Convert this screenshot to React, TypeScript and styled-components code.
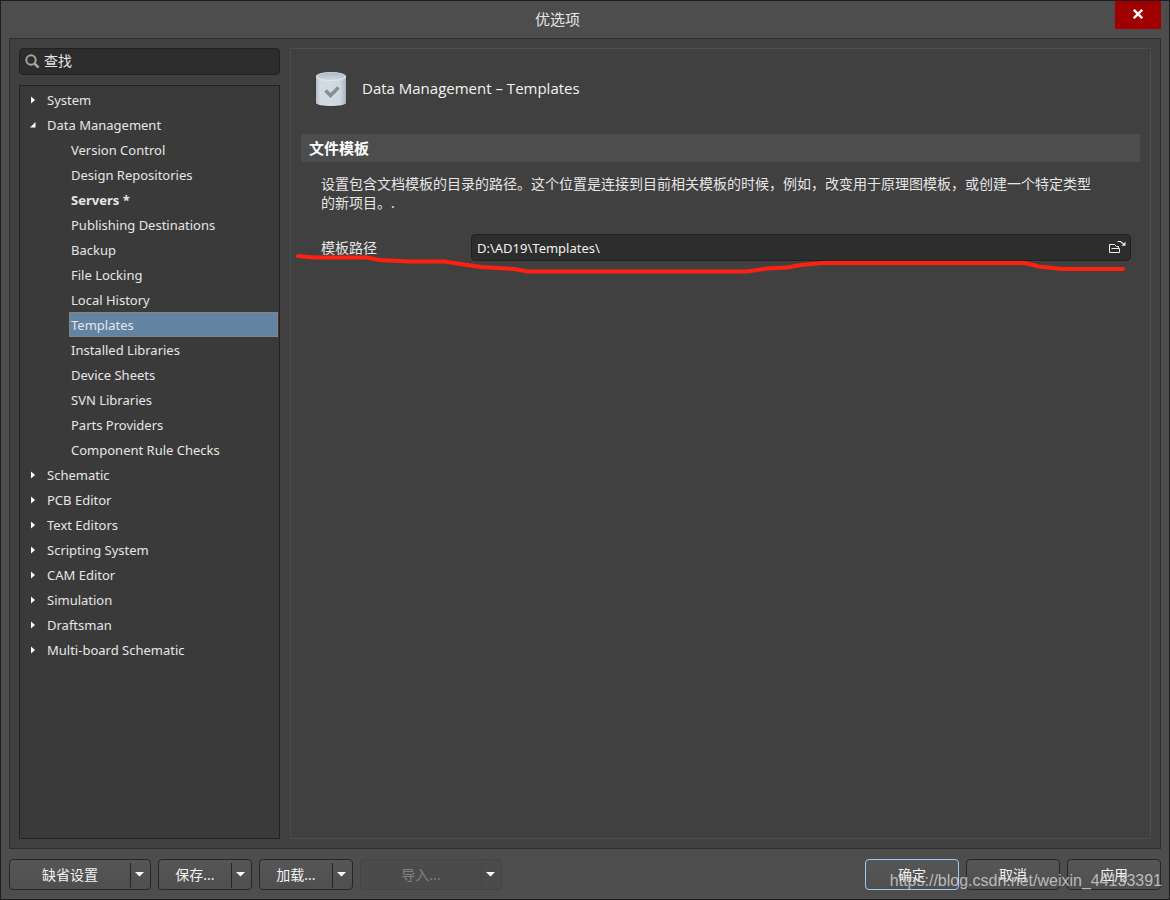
import React from "react";
import styled, { createGlobalStyle } from "styled-components";

const GlobalStyle = createGlobalStyle`
  * { box-sizing: border-box; }
  body {
    margin: 0;
    background: #4d4d4d;
    color: #e6e6e6;
    font-family: "Noto Sans", "Noto Sans CJK SC", sans-serif;
    font-size: 14px;
  }
  button, input { font: inherit; color: inherit; }
  ul { list-style: none; margin: 0; padding: 0; }
`;

const Window = styled.div`
  position: relative;
  display: flex;
  flex-direction: column;
  min-height: 100vh;
  padding: 0 8px;
  border: 1px solid #1e1e1e;
  background: #4d4d4d;
`;

const TitleBar = styled.header`
  display: flex;
  align-items: flex-start;
  height: 37px;
`;

const WindowTitle = styled.h1`
  flex: 1;
  margin: 0;
  padding-right: 9px;
  text-align: center;
  font-size: 15px;
  font-weight: 400;
  line-height: 36px;
`;

const CloseButton = styled.button`
  display: flex;
  align-items: center;
  justify-content: center;
  width: 46px;
  height: 28px;
  padding: 0 1px 2px 0;
  border: 0;
  background: #a00000;
`;

const Workspace = styled.main`
  flex: 1;
  display: flex;
  gap: 10px;
  padding: 9px;
  border: 1px solid #2e2e2e;
  background: #404040;
`;

const Sidebar = styled.aside`
  display: flex;
  flex-direction: column;
  flex: 0 0 261px;
  gap: 10px;
`;

const SearchBox = styled.label`
  display: flex;
  align-items: center;
  gap: 4px;
  height: 27px;
  padding: 0 5px;
  border: 1px solid #222;
  border-radius: 4px;
  background: #2d2d2d;
`;

const TextInput = styled.input`
  flex: 1;
  min-width: 0;
  height: 25px;
  padding: 0 0 2px;
  border: 0;
  outline: 0;
  background: transparent;
  color: #f2f2f2;
  &::placeholder { color: #e6e6e6; opacity: 1; }
`;

const PathInput = styled(TextInput)`
  padding: 0;
  font-size: 13px;
`;

const Tree = styled.nav`
  flex: 1;
  padding: 1px;
  border: 1px solid #222;
  background: #3a3a3a;
  font-size: 13px;
`;

const BranchButton = styled.button`
  display: flex;
  align-items: center;
  width: 100%;
  height: 25px;
  padding: 2px 0 0 9px;
  border: 0;
  background: transparent;
  line-height: 25px;
  text-align: left;
`;

const ArrowSlot = styled.span`
  display: flex;
  width: 17px;
  padding-bottom: 2px;
`;

const LeafItem = styled.li`
  padding-left: 48px;
`;

const LeafButton = styled.button<{ $selected?: boolean; $modified?: boolean }>`
  display: block;
  width: 100%;
  height: 25px;
  padding: 2px 1px 0;
  border: 1px dotted ${(p) => (p.$selected ? "#b08050" : "transparent")};
  background: ${(p) => (p.$selected ? "#6383a3" : "transparent")};
  font-weight: ${(p) => (p.$modified ? 700 : 400)};
  line-height: 21px;
  text-align: left;
`;

const Page = styled.section`
  position: relative;
  flex: 1;
  min-width: 0;
  padding: 10px;
  border: 1px solid #4d4d4d;
`;

const PageHeader = styled.div`
  display: flex;
  align-items: center;
  gap: 11px;
  height: 60px;
  padding-left: 10px;
`;

const PageTitle = styled.h2`
  margin: 0;
  padding-bottom: 2px;
  font-family: "Open Sans", "Noto Sans CJK SC", sans-serif;
  font-size: 15px;
  font-weight: 400;
  color: #f2f2f2;
`;

const SectionTitle = styled.h3`
  margin: 15px 0 0;
  padding: 0 8px;
  background: #4d4d4d;
  color: #fff;
  font-size: 15px;
  font-weight: 700;
  line-height: 28px;
`;

const Description = styled.p`
  margin: 12px 40px 0 20px;
  line-height: 19px;
`;

const Field = styled.div`
  display: flex;
  align-items: center;
  margin: 22px 9px 0 20px;
`;

const FieldLabel = styled.label`
  flex: 0 0 150px;
  padding-bottom: 2px;
`;

const PathBox = styled.div`
  flex: 1;
  display: flex;
  align-items: center;
  height: 27px;
  padding: 0 3px 0 5px;
  border: 1px solid #222;
  border-radius: 4px;
  background: #2d2d2d;
`;

const IconButton = styled.button`
  display: flex;
  padding: 0;
  border: 0;
  background: transparent;
`;

const MarkerLine = styled.svg`
  position: absolute;
  top: 201px;
  left: 0;
  width: 100%;
  height: 28px;
  pointer-events: none;
`;

const Footer = styled.footer`
  display: flex;
  justify-content: space-between;
  padding: 10px 0 9px;
`;

const ButtonGroup = styled.div`
  display: flex;
  gap: 7px;
`;

const SplitButton = styled.div<{ $wide?: boolean; $disabled?: boolean }>`
  display: flex;
  width: ${(p) => (p.$wide ? 142 : 94)}px;
  height: 31px;
  border: 1px solid ${(p) => (p.$disabled ? "#444" : "#262626")};
  border-radius: 4px;
  background: ${(p) => (p.$disabled ? "#4b4b4b" : "linear-gradient(#565656, #4f4f4f)")};
`;

const SplitAction = styled.button`
  flex: 1;
  padding: 0 0 2px;
  border: 0;
  background: transparent;
  color: #f2f2f2;
  &:disabled { color: #808080; }
`;

const SplitToggle = styled.button<{ $disabled?: boolean }>`
  display: flex;
  align-items: center;
  justify-content: center;
  width: 20px;
  margin: 3px 0 1px;
  padding: 0 2px 2px 0;
  border: 0;
  border-left: 1px solid ${(p) => (p.$disabled ? "#444" : "#262626")};
  background: transparent;
`;

const DialogButton = styled.button<{ $primary?: boolean }>`
  width: 94px;
  height: 31px;
  padding: 0 0 2px;
  border: 1px solid ${(p) => (p.$primary ? "#99c9f5" : "#262626")};
  border-radius: 4px;
  background: linear-gradient(#565656, #4f4f4f);
  color: #f2f2f2;
`;

const Watermark = styled.span`
  position: absolute;
  right: 7px;
  bottom: 8px;
  color: rgba(215, 215, 215, 0.8);
  font-family: "Liberation Sans", sans-serif;
  font-size: 16px;
  line-height: 20px;
  pointer-events: none;
`;

type Branch = { name: string; children?: string[] };

const branches: Branch[] = [
  { name: "System" },
  {
    name: "Data Management",
    children: [
      "Version Control",
      "Design Repositories",
      "Servers *",
      "Publishing Destinations",
      "Backup",
      "File Locking",
      "Local History",
      "Templates",
      "Installed Libraries",
      "Device Sheets",
      "SVN Libraries",
      "Parts Providers",
      "Component Rule Checks",
    ],
  },
  { name: "Schematic" },
  { name: "PCB Editor" },
  { name: "Text Editors" },
  { name: "Scripting System" },
  { name: "CAM Editor" },
  { name: "Simulation" },
  { name: "Draftsman" },
  { name: "Multi-board Schematic" },
];

const splitButtons = [
  { label: "缺省设置", wide: true },
  { label: "保存..." },
  { label: "加载..." },
  { label: "导入...", wide: true, disabled: true },
];

const Arrow = ({ open }: { open: boolean }) => (
  <svg width="7" height="8" viewBox="0 0 7 8" fill="#fff" aria-hidden="true">
    <path d={open ? "M0 6.5H5.5V1Z" : "M1 0.5V7.5L5 4Z"} />
  </svg>
);

const Caret = () => (
  <svg width="9" height="5" viewBox="0 0 9 5" fill="#fff" aria-hidden="true">
    <path d="M0 0H9L4.5 4.6Z" />
  </svg>
);

const SearchIcon = () => (
  <svg width="15" height="15" viewBox="0 0 15 15" fill="none" stroke="#a3a3a3" aria-hidden="true">
    <circle cx="6" cy="6" r="4.7" strokeWidth="2" />
    <path d="M9.5 9.5L13.6 13.6" strokeWidth="2.6" />
  </svg>
);

const DatabaseIcon = () => (
  <svg width="40" height="40" viewBox="0 0 40 40" aria-hidden="true">
    <defs>
      <linearGradient id="drum">
        <stop offset="0" stopColor="#b4bdc7" />
        <stop offset="0.15" stopColor="#d3dae2" />
        <stop offset="0.8" stopColor="#cfd7e0" />
        <stop offset="1" stopColor="#aab4bf" />
      </linearGradient>
      <linearGradient id="lid" x2="0" y2="1">
        <stop offset="0" stopColor="#aeb9c3" />
        <stop offset="1" stopColor="#cdd6de" />
      </linearGradient>
    </defs>
    <path d="M4.5 9V34.5C5 39 35 39 35.5 34.5V9Z" fill="#2d2d2d" opacity="0.5" />
    <path d="M5 7.5V34C5 38 35 38 35 34V7.5Z" fill="url(#drum)" />
    <ellipse cx="20" cy="7.5" rx="15" ry="4.6" fill="#dfe6ec" />
    <ellipse cx="20" cy="7.3" rx="14" ry="3.7" fill="url(#lid)" />
    <path d="M14.5 21.5L19.5 26.5L27.5 18.5" fill="none" stroke="#858d96" strokeWidth="3.4" />
  </svg>
);

const BrowseIcon = () => (
  <svg width="18" height="15" viewBox="0 0 18 15" fill="none" stroke="#eee" aria-hidden="true">
    <path d="M0.5 12.5V4.5H5.5L7.5 6.5H9.5V8M0.5 12.5H10.5V8.5H2.5" />
    <path d="M8.5 1.5H11.5L14.5 4" strokeWidth="1.2" />
    <path d="M16.5 1.8V5.8H12.4Z" fill="#eee" stroke="none" />
  </svg>
);

export default function App() {
  return (
    <>
      <GlobalStyle />
      <Window lang="zh-CN">
        <TitleBar>
          <WindowTitle>优选项</WindowTitle>
          <CloseButton aria-label="关闭">
            <svg width="10" height="10" viewBox="0 0 10 10" stroke="#fff" strokeWidth="2.4" aria-hidden="true">
              <path d="M0.8 0.8L9.2 9.2M9.2 0.8L0.8 9.2" />
            </svg>
          </CloseButton>
        </TitleBar>

        <Workspace>
          <Sidebar>
            <SearchBox>
              <SearchIcon />
              <TextInput type="text" placeholder="查找" aria-label="查找" />
            </SearchBox>
            <Tree>
              <ul>
                {branches.map((branch) => (
                  <li key={branch.name}>
                    <BranchButton aria-expanded={!!branch.children}>
                      <ArrowSlot>
                        <Arrow open={!!branch.children} />
                      </ArrowSlot>
                      {branch.name}
                    </BranchButton>
                    {branch.children && (
                      <ul>
                        {branch.children.map((name) => (
                          <LeafItem key={name}>
                            <LeafButton $selected={name === "Templates"} $modified={name.endsWith("*")}>
                              {name}
                            </LeafButton>
                          </LeafItem>
                        ))}
                      </ul>
                    )}
                  </li>
                ))}
              </ul>
            </Tree>
          </Sidebar>

          <Page>
            <PageHeader>
              <DatabaseIcon />
              <PageTitle>Data Management – Templates</PageTitle>
            </PageHeader>
            <SectionTitle>文件模板</SectionTitle>
            <Description>
              设置包含文档模板的目录的路径。这个位置是连接到目前相关模板的时候，例如，改变用于原理图模板，或创建一个特定类型的新项目。.
            </Description>
            <Field>
              <FieldLabel htmlFor="template-path">模板路径</FieldLabel>
              <PathBox>
                <PathInput id="template-path" type="text" defaultValue={"D:\\AD19\\Templates\\"} />
                <IconButton aria-label="浏览">
                  <BrowseIcon />
                </IconButton>
              </PathBox>
            </Field>
            <MarkerLine viewBox="0 0 859 28" preserveAspectRatio="none" aria-hidden="true">
              <path
                d="M7 6L24 7.5H75L89 10L117 11.5H153L190 17L223 19L237 21.5H456L476 18.5L496 17.5L510 15L532 13H734L748 16.5L771 19H832"
                fill="none"
                stroke="#ff2010"
                strokeWidth="4"
                strokeLinecap="round"
                strokeLinejoin="round"
                vectorEffect="non-scaling-stroke"
              />
            </MarkerLine>
          </Page>
        </Workspace>

        <Footer>
          <ButtonGroup>
            {splitButtons.map(({ label, wide, disabled }) => (
              <SplitButton key={label} $wide={wide} $disabled={disabled}>
                <SplitAction disabled={disabled}>{label}</SplitAction>
                <SplitToggle $disabled={disabled} aria-label={label}>
                  <Caret />
                </SplitToggle>
              </SplitButton>
            ))}
          </ButtonGroup>
          <ButtonGroup>
            <DialogButton $primary>确定</DialogButton>
            <DialogButton>取消</DialogButton>
            <DialogButton>应用</DialogButton>
          </ButtonGroup>
        </Footer>
        <Watermark>https://blog.csdn.net/weixin_44133391</Watermark>
      </Window>
    </>
  );
}
